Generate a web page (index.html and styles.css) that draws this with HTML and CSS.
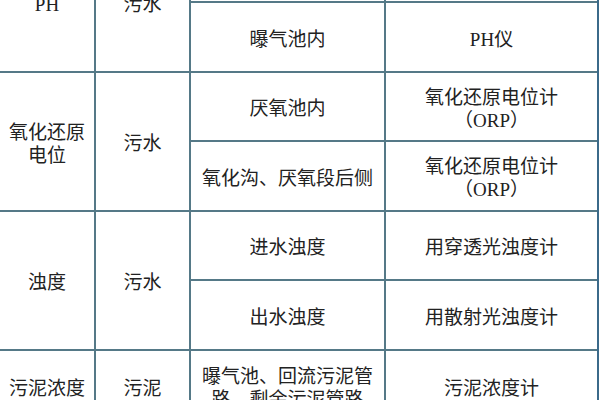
FILE: index.html
```html
<!DOCTYPE html>
<html lang="zh">
<head>
<meta charset="utf-8">
<title>水质监测仪表</title>
<link rel="stylesheet" href="styles.css">
</head>
<body>
<div class="table">
  <div class="cell span2">PH</div>
  <div class="cell span2">污水</div>
  <div class="cell"></div>
  <div class="cell"></div>

  <div class="cell">曝气池内</div>
  <div class="cell">PH仪</div>

  <div class="cell span2">氧化还原<br>电位</div>
  <div class="cell span2">污水</div>
  <div class="cell">厌氧池内</div>
  <div class="cell">氧化还原电位计<br>（ORP）</div>

  <div class="cell">氧化沟、厌氧段后侧</div>
  <div class="cell">氧化还原电位计<br>（ORP）</div>

  <div class="cell span2">浊度</div>
  <div class="cell span2">污水</div>
  <div class="cell">进水浊度</div>
  <div class="cell">用穿透光浊度计</div>

  <div class="cell">出水浊度</div>
  <div class="cell">用散射光浊度计</div>

  <div class="cell">污泥浓度</div>
  <div class="cell">污泥</div>
  <div class="cell">曝气池、回流污泥管<br>路、剩余污泥管路</div>
  <div class="cell">污泥浓度计</div>
</div>
</body>
</html>
```

FILE: styles.css
```css
html, body {
  margin: 0;
  padding: 0;
  background: #ffffff;
  overflow: hidden;
}

.table {
  display: grid;
  grid-template-columns: 94px 93px 193px 211px;
  grid-template-rows: 67px 68px 67px 68px 67px 68px 70px;
  gap: 2px;
  width: 597px;
  padding-right: 2px;
  margin-top: -66px;
  background: linear-gradient(to right, #557987 0, #557987 597px, #3b6a8a 597px);
  font-family: "Liberation Serif", "Noto Sans CJK SC", serif;
  font-size: 19px;
  line-height: 23px;
  color: #222222;
}

.cell {
  background: #ffffff;
  display: flex;
  align-items: center;
  justify-content: center;
  text-align: center;
  padding: 4px 4px 0;
}

.span2 {
  grid-row: span 2;
}
```
